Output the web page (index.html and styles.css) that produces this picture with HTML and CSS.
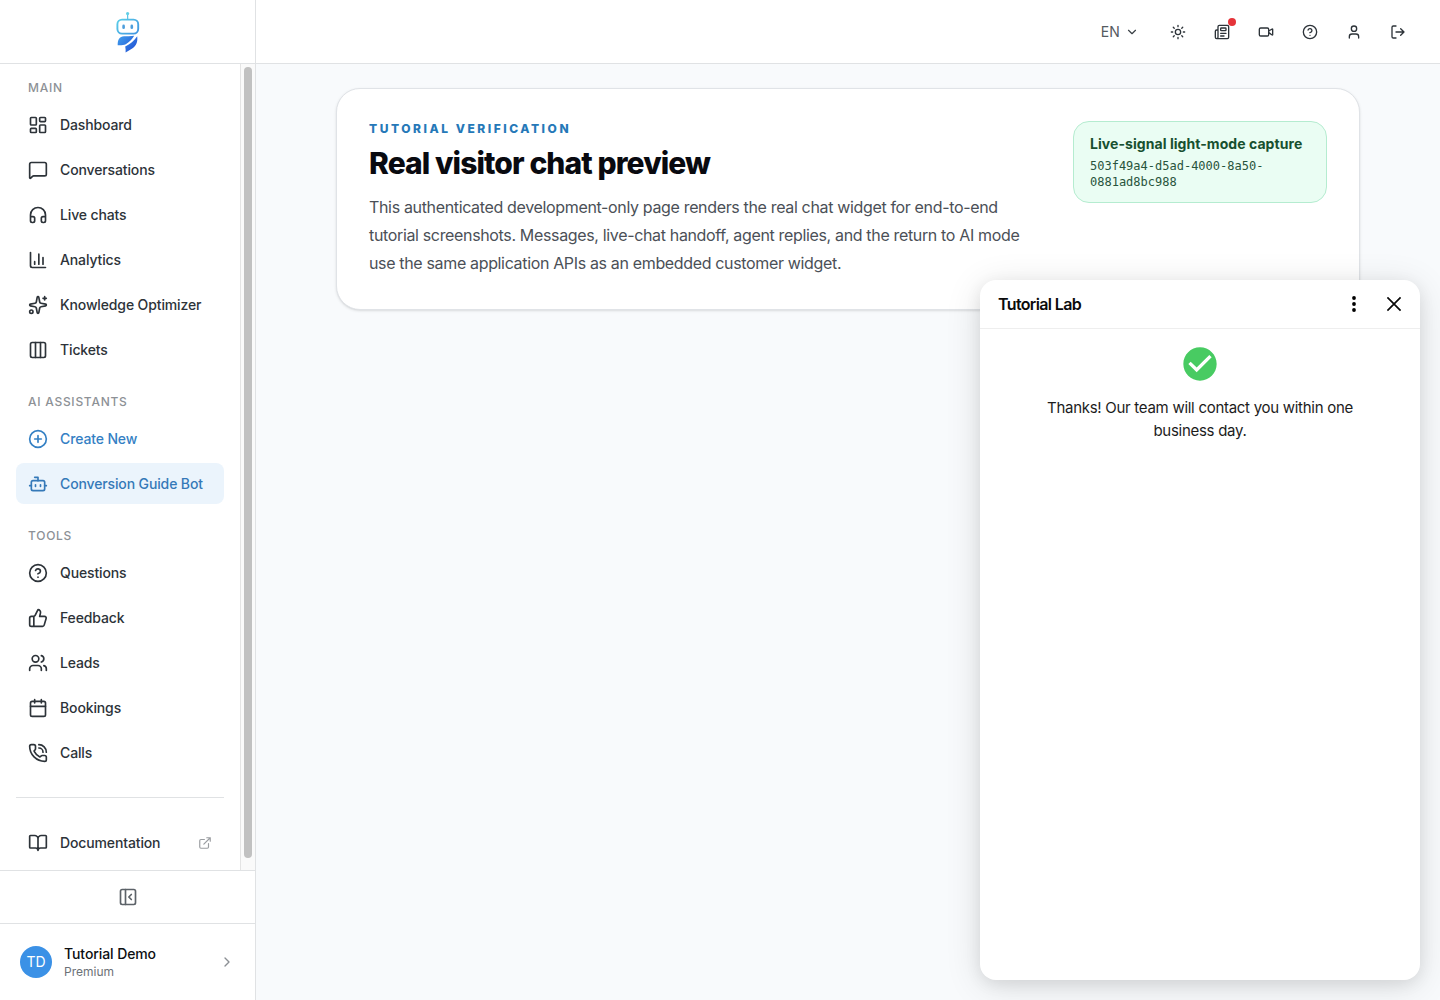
FILE: index.html
```html
<!DOCTYPE html>
<html lang="en">
<head>
<meta charset="UTF-8">
<title>Real visitor chat preview</title>
<link rel="stylesheet" href="styles.css">
</head>
<body>
<div class="app">
  <aside class="sidebar">
    <div class="logo">
      <svg width="26" height="42" viewBox="0 0 26 42" fill="none">
        <defs>
          <linearGradient id="head" x1="4" y1="2" x2="22" y2="24" gradientUnits="userSpaceOnUse"><stop stop-color="#5fd8ea"/><stop offset="1" stop-color="#3f93e0"/></linearGradient>
          <linearGradient id="body" x1="3" y1="26" x2="18" y2="40" gradientUnits="userSpaceOnUse"><stop stop-color="#3f9cec"/><stop offset="1" stop-color="#2457d6"/></linearGradient>
        </defs>
        <g stroke="url(#head)">
          <path d="M12.600 3l.1 6" stroke-width="1.2"/>
          <rect x="2.400" y="8.600" width="20.800" height="14" rx="4.600" stroke-width="1.900"/>
        </g>
        <circle cx="12.600" cy="2.600" r="1.600" fill="#62cfe6"/>
        <rect x="7.300" y="13.600" width="2.600" height="4.400" rx="1.300" fill="#4d9edc"/>
        <rect x="15.500" y="13.600" width="2.600" height="4.400" rx="1.300" fill="#4d9edc"/>
        <path d="M2.700 34.200c-.2-5.400 1.800-8.600 6.300-8.900 3.800-.2 7.200.2 10.200-.5-1.800 3.200-4.400 6-8.400 8.400-2.400 1.200-5.200 1-8.100 1z" fill="url(#body)"/>
        <path d="M22.200 25.200c.7 5.600-.9 9.600-5 12.200l-6.600 4.100c.2-2.200 0-4-.4-6 5.200-2.400 8.700-5.500 12-10.300z" fill="url(#body)"/>
      </svg>
    </div>
    <div class="scroll">
      <nav class="nav">
        <div class="group">
          <h2 class="label">MAIN</h2>
          <a class="item"><svg class="icon" viewBox="0 0 24 24"><rect width="7" height="9" x="3" y="3" rx="1"/><rect width="7" height="5" x="14" y="3" rx="1"/><rect width="7" height="9" x="14" y="12" rx="1"/><rect width="7" height="5" x="3" y="16" rx="1"/></svg>Dashboard</a>
          <a class="item"><svg class="icon" viewBox="0 0 24 24"><path d="M22 17a2 2 0 0 1-2 2H6.828a2 2 0 0 0-1.414.586l-2.202 2.202A.71.71 0 0 1 2 21.286V5a2 2 0 0 1 2-2h16a2 2 0 0 1 2 2z"/></svg>Conversations</a>
          <a class="item"><svg class="icon" viewBox="0 0 24 24"><path d="M3 14h3a2 2 0 0 1 2 2v3a2 2 0 0 1-2 2H5a2 2 0 0 1-2-2v-7a9 9 0 0 1 18 0v7a2 2 0 0 1-2 2h-1a2 2 0 0 1-2-2v-3a2 2 0 0 1 2-2h3"/></svg>Live chats</a>
          <a class="item"><svg class="icon" viewBox="0 0 24 24"><path d="M3 3v16a2 2 0 0 0 2 2h16M18 17V9M13 17V5M8 17v-3"/></svg>Analytics</a>
          <a class="item"><svg class="icon" viewBox="0 0 24 24"><path d="M11.017 2.814a1 1 0 0 1 1.966 0l1.051 5.558a2 2 0 0 0 1.594 1.594l5.558 1.051a1 1 0 0 1 0 1.966l-5.558 1.051a2 2 0 0 0-1.594 1.594l-1.051 5.558a1 1 0 0 1-1.966 0l-1.051-5.558a2 2 0 0 0-1.594-1.594l-5.558-1.051a1 1 0 0 1 0-1.966l5.558-1.051a2 2 0 0 0 1.594-1.594zM20 2v4M22 4h-4"/><circle cx="4" cy="20" r="2"/></svg>Knowledge Optimizer</a>
          <a class="item"><svg class="icon" viewBox="0 0 24 24"><rect width="18" height="18" x="3" y="3" rx="2"/><path d="M9 3v18M15 3v18"/></svg>Tickets</a>
        </div>
        <div class="group">
          <h2 class="label">AI ASSISTANTS</h2>
          <a class="item create"><svg class="icon" viewBox="0 0 24 24"><circle cx="12" cy="12" r="10"/><path d="M8 12h8M12 8v8"/></svg>Create New</a>
          <a class="item active"><svg class="icon" viewBox="0 0 24 24"><path d="M12 8V4H8"/><rect width="16" height="12" x="4" y="8" rx="2"/><path d="M2 14h2M20 14h2M15 13v2M9 13v2"/></svg>Conversion Guide Bot</a>
        </div>
        <div class="group">
          <h2 class="label">TOOLS</h2>
          <a class="item"><svg class="icon" viewBox="0 0 24 24"><circle cx="12" cy="12" r="10"/><path d="M9.090 9a3 3 0 0 1 5.830 1c0 2-3 3-3 3M12 17h.01"/></svg>Questions</a>
          <a class="item"><svg class="icon" viewBox="0 0 24 24"><path d="M7 10v12M15 5.880 14 10h5.830a2 2 0 0 1 1.920 2.560l-2.330 8A2 2 0 0 1 17.500 22H4a2 2 0 0 1-2-2v-8a2 2 0 0 1 2-2h2.760a2 2 0 0 0 1.790-1.110L12 2a3.130 3.130 0 0 1 3 3.880Z"/></svg>Feedback</a>
          <a class="item"><svg class="icon" viewBox="0 0 24 24"><path d="M16 21v-2a4 4 0 0 0-4-4H6a4 4 0 0 0-4 4v2M16 3.128a4 4 0 0 1 0 7.744M22 21v-2a4 4 0 0 0-3-3.870"/><circle cx="9" cy="7" r="4"/></svg>Leads</a>
          <a class="item"><svg class="icon" viewBox="0 0 24 24"><path d="M8 2v4M16 2v4M3 10h18"/><rect width="18" height="18" x="3" y="4" rx="2"/></svg>Bookings</a>
          <a class="item"><svg class="icon" viewBox="0 0 24 24"><path d="M13 2a9 9 0 0 1 9 9M13 6a5 5 0 0 1 5 5M13.832 16.568a1 1 0 0 0 1.213-.303l.355-.465A2 2 0 0 1 17 15h3a2 2 0 0 1 2 2v3a2 2 0 0 1-2 2A18 18 0 0 1 2 4a2 2 0 0 1 2-2h3a2 2 0 0 1 2 2v3a2 2 0 0 1-.8 1.600l-.468.351a1 1 0 0 0-.292 1.233 14 14 0 0 0 6.392 6.384"/></svg>Calls</a>
        </div>
        <div class="docs">
          <a class="item"><svg class="icon" viewBox="0 0 24 24"><path d="M12 7v14M3 18a1 1 0 0 1-1-1V4a1 1 0 0 1 1-1h5a4 4 0 0 1 4 4 4 4 0 0 1 4-4h5a1 1 0 0 1 1 1v13a1 1 0 0 1-1 1h-6a3 3 0 0 0-3 3 3 3 0 0 0-3-3z"/></svg>Documentation<svg class="icon ext" viewBox="0 0 24 24"><path d="M15 3h6v6M10 14 21 3M18 13v6a2 2 0 0 1-2 2H5a2 2 0 0 1-2-2V8a2 2 0 0 1 2-2h6"/></svg></a>
        </div>
      </nav>
      <div class="track"><div class="thumb"></div></div>
    </div>
    <div class="collapse">
      <svg class="icon" viewBox="0 0 24 24"><rect width="18" height="18" x="3" y="3" rx="2"/><path d="M9 3v18M16 15l-3-3 3-3"/></svg>
    </div>
    <div class="user">
      <div class="avatar">TD</div>
      <div class="who">
        <div class="name">Tutorial Demo</div>
        <div class="plan">Premium</div>
      </div>
      <svg class="icon chev" viewBox="0 0 24 24"><path d="m9 18 6-6-6-6"/></svg>
    </div>
  </aside>

  <div class="content">
    <header class="topbar">
      <div class="lang">EN<svg class="icon" viewBox="0 0 24 24"><path d="m6 9 6 6 6-6"/></svg></div>
      <a class="tool"><svg class="icon" viewBox="0 0 24 24"><circle cx="12" cy="12" r="4"/><path d="M12 2v2M12 20v2M4.930 4.930l1.410 1.410M17.660 17.660l1.410 1.410M2 12h2M20 12h2M6.340 17.660l-1.410 1.410M19.070 4.930l-1.410 1.410"/></svg></a>
      <a class="tool"><svg class="icon" viewBox="0 0 24 24"><path d="M15 18h-5M18 14h-8M4 22h16a2 2 0 0 0 2-2V4a2 2 0 0 0-2-2H8a2 2 0 0 0-2 2v16a2 2 0 0 1-4 0v-9a2 2 0 0 1 2-2h2"/><rect width="8" height="4" x="10" y="6" rx="1"/></svg><span class="dot"></span></a>
      <a class="tool"><svg class="icon" viewBox="0 0 24 24"><path d="m16 13 5.223 3.482a.5.5 0 0 0 .777-.416V7.870a.5.5 0 0 0-.752-.432L16 10.500"/><rect x="2" y="6" width="14" height="12" rx="2"/></svg></a>
      <a class="tool"><svg class="icon" viewBox="0 0 24 24"><circle cx="12" cy="12" r="10"/><path d="M9.090 9a3 3 0 0 1 5.830 1c0 2-3 3-3 3M12 17h.01"/></svg></a>
      <a class="tool"><svg class="icon" viewBox="0 0 24 24"><path d="M19 21v-2a4 4 0 0 0-4-4H9a4 4 0 0 0-4 4v2"/><circle cx="12" cy="7" r="4"/></svg></a>
      <a class="tool"><svg class="icon" viewBox="0 0 24 24"><path d="m16 17 5-5-5-5M21 12H9M9 21H5a2 2 0 0 1-2-2V5a2 2 0 0 1 2-2h4"/></svg></a>
    </header>
    <main class="page">
      <section class="card">
        <div class="intro">
          <p class="eyebrow">TUTORIAL VERIFICATION</p>
          <h1 class="title">Real visitor chat preview</h1>
          <p class="desc">This authenticated development-only page renders the real chat widget for end-to-end tutorial screenshots. Messages, live-chat handoff, agent replies, and the return to AI mode use the same application APIs as an embedded customer widget.</p>
        </div>
        <div class="capture">
          <div class="capture-title">Live-signal light-mode capture</div>
          <div class="capture-id">503f49a4-d5ad-4000-8a50-0881ad8bc988</div>
        </div>
      </section>
    </main>
  </div>
</div>

<div class="widget">
  <div class="widget-head">
    <span class="widget-title">Tutorial Lab</span>
    <svg width="24" height="24" viewBox="0 0 24 24"><circle cx="12" cy="6" r="1.900"/><circle cx="12" cy="12" r="1.900"/><circle cx="12" cy="18" r="1.900"/></svg>
    <svg width="24" height="24" viewBox="0 0 24 24"><path d="M5.400 5.400l13.200 13.200M18.600 5.400 5.400 18.600" stroke="#0b0b0b" stroke-width="1.700"/></svg>
  </div>
  <div class="widget-body">
    <svg width="40" height="40" viewBox="0 0 24 24"><path fill="#48cb62" d="M12 2C6.480 2 2 6.480 2 12s4.480 10 10 10 10-4.480 10-10S17.520 2 12 2zm-2 15-5-5 1.410-1.410L10 14.170l7.590-7.590L19 8l-9 9z"/></svg>
    <p class="thanks">Thanks! Our team will contact you within one business day.</p>
  </div>
</div>
</body>
</html>
```
FILE: styles.css
```css
*{box-sizing:border-box;margin:0;padding:0}
html,body{height:100%;overflow:hidden;}
body{font-family:Inter,"Liberation Sans",sans-serif; font-size:14px; color:#2d3339; background:#f8fafc;}
.app{display:flex; height:100vh;}
.icon{width:20px; height:20px; flex:none; fill:none; stroke:currentColor; stroke-width:2; stroke-linecap:round; stroke-linejoin:round;}

/* sidebar */
.sidebar{width:256px; flex:none; display:flex; flex-direction:column; background:#fff; border-right:1px solid #e0e2e4;}
.logo{height:64px; flex:none; display:flex; justify-content:center; align-items:center; border-bottom:1px solid #e0e2e4;}
.scroll{flex:1; min-height:0; display:flex;}
.nav{flex:1; padding:16px 16px 0; overflow:hidden;}
.group{display:flex; flex-direction:column; gap:4px; margin-bottom:24px;}
.label{padding-left:12px; margin-bottom:4px; font-size:12px; line-height:16px; font-weight:500; letter-spacing:.74px; color:#8d9196;}
.item{display:flex; align-items:center; gap:12px; height:41px; padding:0 12px; border-radius:8px; font-weight:500; letter-spacing:-.13px;}
.create{color:#3480c4;}
.active{color:#3579b8; background:#ebf4fc;}
.docs{border-top:1px solid #e0e2e4; padding-top:24px;}
.ext{width:14px; height:14px; margin-left:auto; color:#9a9da1;}
.track{width:15px; flex:none; padding:3px 3px 12px; background:#fafafa; border-left:1px solid #e4e4e4;}
.thumb{height:100%; width:8px; border-radius:4px; background:#c1c1c1;}
.collapse{height:53px; flex:none; display:flex; align-items:center; justify-content:center; border-top:1px solid #e0e2e4; color:#5c6268;}
.user{height:77px; flex:none; display:flex; align-items:center; gap:12px; padding:0 20px; border-top:1px solid #e0e2e4;}
.avatar{width:32px; height:32px; border-radius:50%; background:#3b91e6; color:#fff; font-size:14px; line-height:32px; text-align:center;}
.who{flex:1;}
.name{font-weight:500; line-height:18px; letter-spacing:-.09px; color:#0d0f12;}
.plan{font-size:12px; line-height:17px; color:#6c7177;}
.chev{width:16px; height:16px; color:#8b8f94;}

/* header */
.content{flex:1; min-width:0;}
.topbar{height:64px; display:flex; align-items:center; justify-content:flex-end; gap:8px; padding-right:24px; background:#fff; border-bottom:1px solid #e0e2e4;}
.topbar .icon{width:16px; height:16px;}
.lang{display:flex; align-items:center; gap:5px; margin-right:13px; color:#555b61; letter-spacing:.14px;}
.topbar .lang .icon{width:14px; height:14px; color:#3a4046;}
.tool{position:relative; width:36px; height:36px; display:flex; align-items:center; justify-content:center;}
.dot{position:absolute; top:4px; right:4px; width:8px; height:8px; border-radius:50%; background:#e5343a;}

/* page */
.page{padding:24px 80px;}
.card{display:flex; justify-content:space-between; align-items:flex-start; padding:32px; background:#fff; border:1px solid #e0e3e7; border-radius:24px; box-shadow:0 1px 3px rgba(0,0,0,.1),0 1px 2px -1px rgba(0,0,0,.1);}
.intro{width:672px;}
.eyebrow{font-size:12px; line-height:16px; font-weight:800; letter-spacing:2.530px; color:#2578b8;}
.title{margin-top:8px; font-size:30px; line-height:36px; font-weight:800; letter-spacing:-.9px; color:#090a10;}
.desc{margin-top:12px; font-size:16px; line-height:28px; letter-spacing:-.345px; color:#4b5057;}
.capture{width:254px; padding:12px 16px; background:#eafdf3; border:1px solid #b5ecd0; border-radius:16px; color:#17502f;}
.capture-title{font-weight:700; line-height:20px; letter-spacing:.06px; white-space:nowrap;}
.capture-id{margin-top:4px; font:12px/16px "DejaVu Sans Mono",monospace; color:#28543c;}

/* chat widget */
.widget{position:absolute; right:20px; bottom:20px; width:440px; height:700px; background:#fff; border-radius:16px; overflow:hidden; box-shadow:0 4px 16px rgba(0,0,0,.08),0 6px 36px rgba(0,0,0,.12); color:#0b0b0b;}
.widget-head{display:flex; align-items:center; gap:16px; height:49px; padding:0 14px 0 18px; border-bottom:1px solid #eee;}
.widget-title{flex:1; font-size:16px; font-weight:600; letter-spacing:-.64px;}
.widget-body{display:flex; flex-direction:column; align-items:center; padding:15px 60px;}
.thanks{margin-top:12px; font-size:15px; line-height:23px; text-align:center; letter-spacing:-.28px; color:#1c1c1c;}
```
